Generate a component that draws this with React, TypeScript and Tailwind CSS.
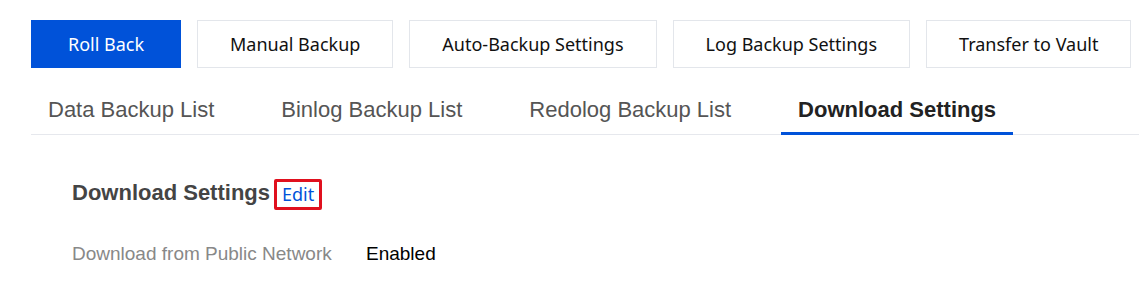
const actions = ["Manual Backup", "Auto-Backup Settings", "Log Backup Settings", "Transfer to Vault"];
const tabs = ["Data Backup List", "Binlog Backup List", "Redolog Backup List", "Download Settings"];

export default function App() {
  const active = 3;

  return (
    <div className="bg-white w-[1139px] h-[290px] overflow-hidden pl-[31px]">
      <div className="flex flex-row gap-4 pt-5">
        <button className="h-12 w-[150px] shrink-0 whitespace-nowrap bg-[#0052d9] text-white text-[18px] font-['Noto_Sans',sans-serif]">
          Roll Back
        </button>
        {actions.map((name) => (
          <button
            key={name}
            className="h-12 px-[32px] shrink-0 whitespace-nowrap border border-[#e3e6eb] bg-white text-[#111] text-[18px] font-['Noto_Sans',sans-serif]"
          >
            {name}
          </button>
        ))}
      </div>

      <div className="flex flex-row items-start gap-[33px] border-b border-[#e6e8ed] font-['Liberation_Sans',Arial,sans-serif]">
        {tabs.map((name, index) => (
          <div
            key={name}
            className={
              index === active
                ? "px-[17px] h-[67px] -mb-px shrink-0 whitespace-nowrap flex items-end pb-[10px] leading-[25px] text-[22px] font-bold text-[#222] border-b-[3px] border-[#0052d9]"
                : "px-[17px] h-[66px] shrink-0 whitespace-nowrap flex items-end pb-[12px] leading-[25px] text-[22px] text-[#555]"
            }
          >
            {name}
          </div>
        ))}
      </div>

      <div className="pl-[41px] pt-[44px] font-['Liberation_Sans',Arial,sans-serif]">
        <div className="flex flex-row items-center h-[31px]">
          <span className="text-[22px] leading-[25px] font-bold text-[#444] -mt-[4px]">Download Settings</span>
          <span className="ml-[4px] border-[3px] border-[#e0101e] rounded-[2px] px-[5px] h-[31px] flex items-center text-[#0052d9] text-[18px] font-['Noto_Sans',sans-serif]">
            Edit
          </span>
        </div>
        <div className="flex flex-row items-center mt-[33px] text-[19px] leading-[22px]">
          <span className="w-[294px] text-[#888]">Download from Public Network</span>
          <span className="text-black">Enabled</span>
        </div>
      </div>
    </div>
  );
}
